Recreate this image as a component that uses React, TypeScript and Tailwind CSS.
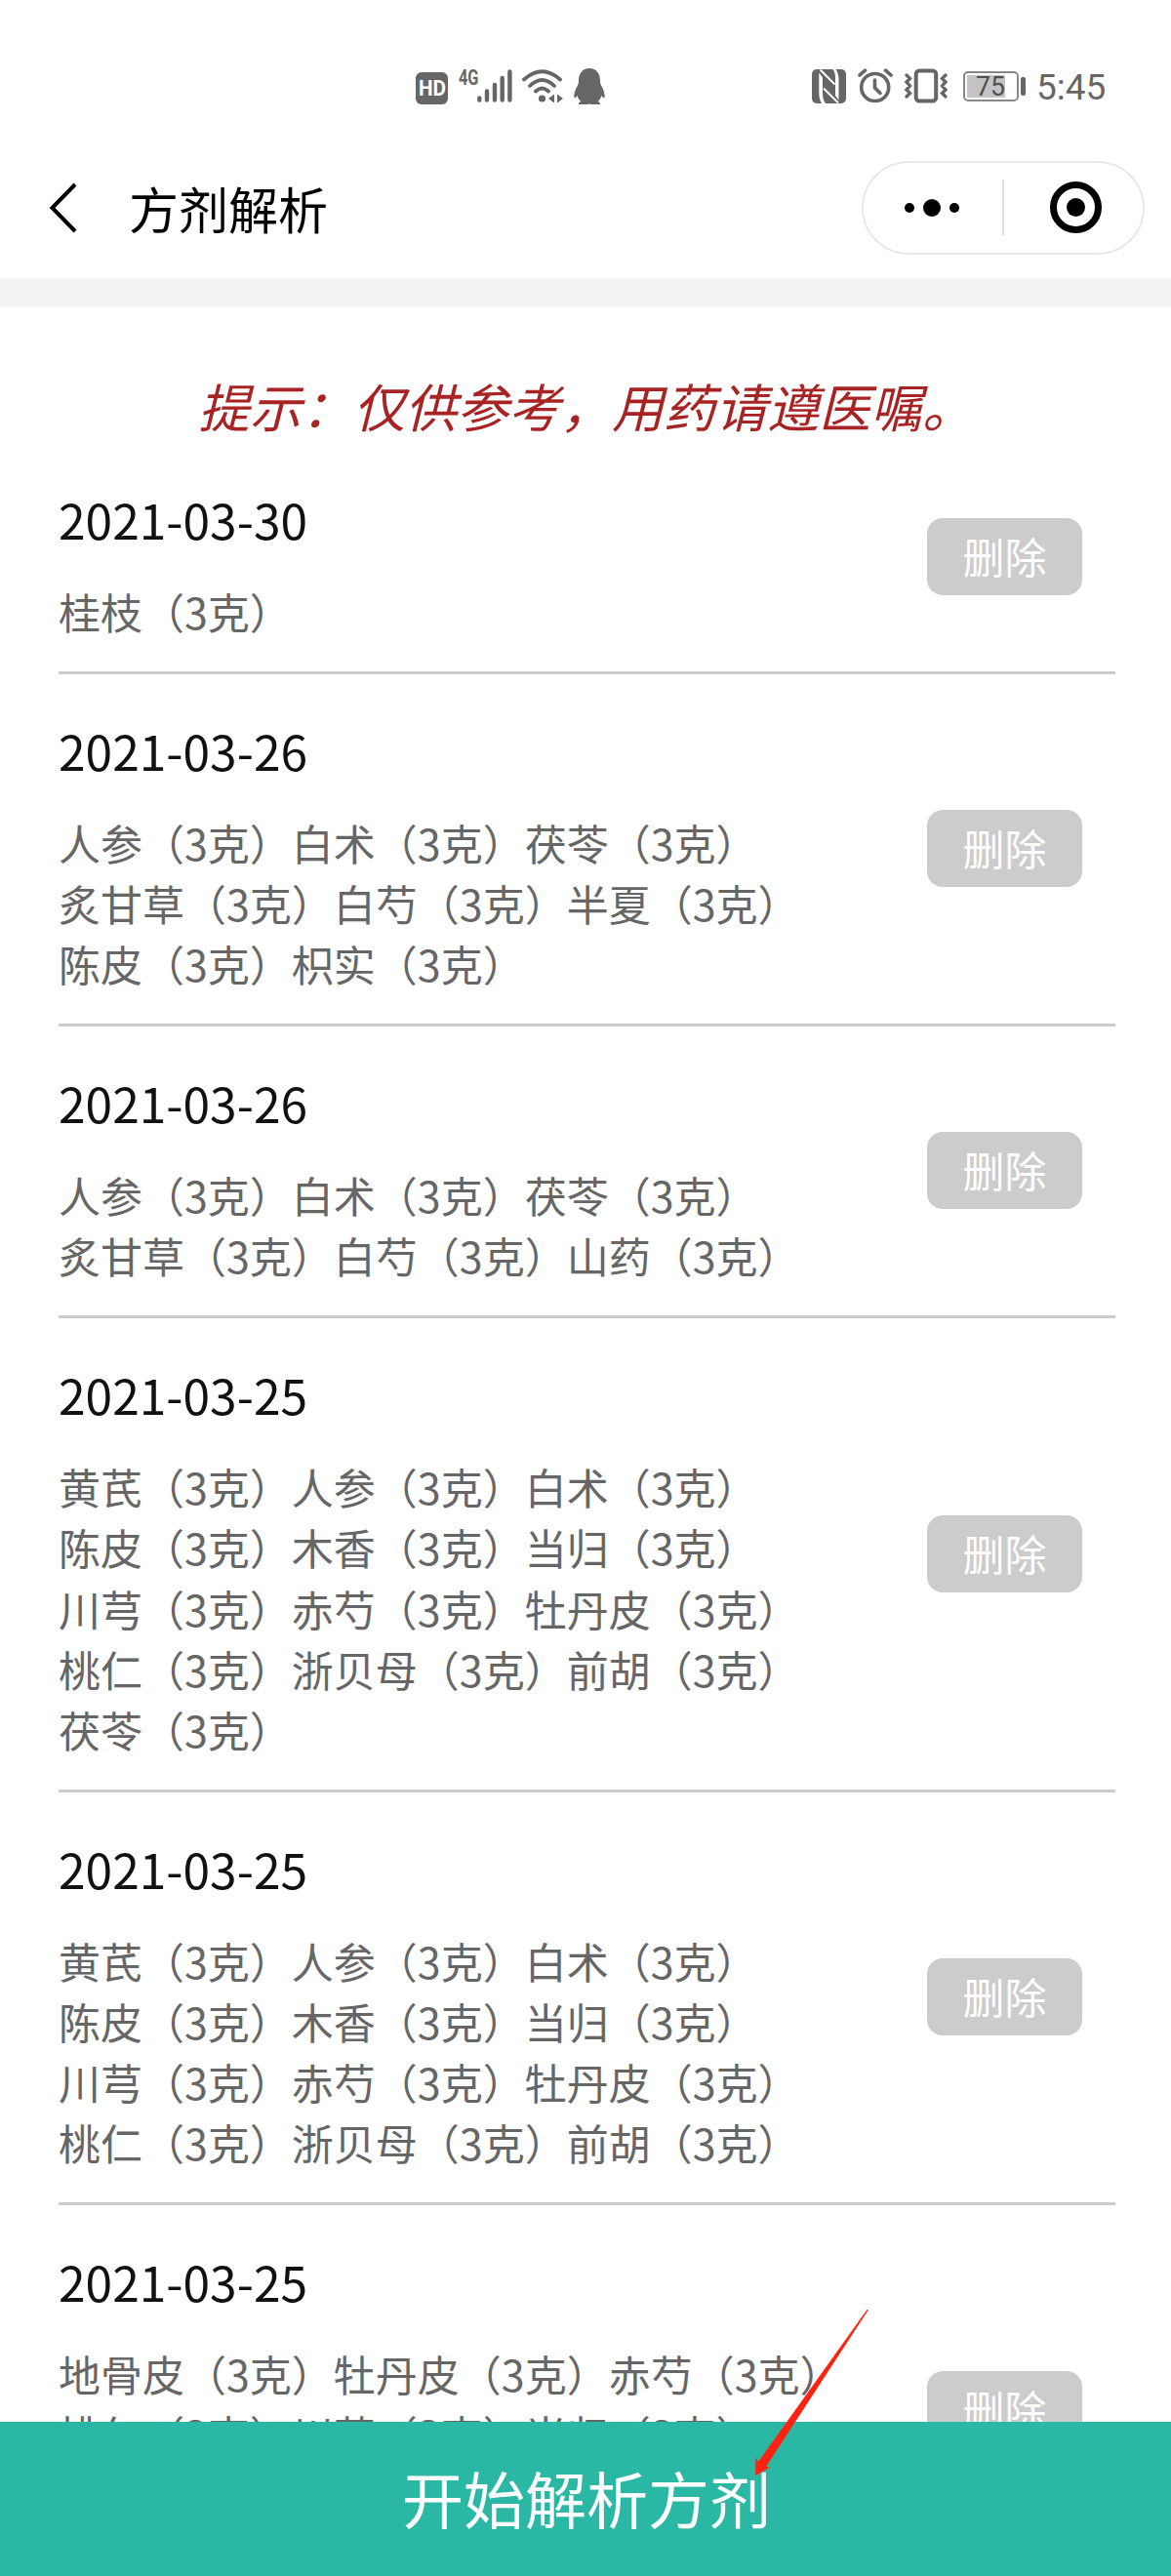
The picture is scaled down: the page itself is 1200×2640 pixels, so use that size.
import React from "react";

type Prescription = {
  id: number;
  date: string;
  lines: string[];
};

const prescriptions: Prescription[] = [
  { id: 1, date: "2021-03-30", lines: ["桂枝（3克）"] },
  {
    id: 2,
    date: "2021-03-26",
    lines: [
      "人参（3克）白术（3克）茯苓（3克）",
      "炙甘草（3克）白芍（3克）半夏（3克）",
      "陈皮（3克）枳实（3克）",
    ],
  },
  {
    id: 3,
    date: "2021-03-26",
    lines: [
      "人参（3克）白术（3克）茯苓（3克）",
      "炙甘草（3克）白芍（3克）山药（3克）",
    ],
  },
  {
    id: 4,
    date: "2021-03-25",
    lines: [
      "黄芪（3克）人参（3克）白术（3克）",
      "陈皮（3克）木香（3克）当归（3克）",
      "川芎（3克）赤芍（3克）牡丹皮（3克）",
      "桃仁（3克）浙贝母（3克）前胡（3克）",
      "茯苓（3克）",
    ],
  },
  {
    id: 5,
    date: "2021-03-25",
    lines: [
      "黄芪（3克）人参（3克）白术（3克）",
      "陈皮（3克）木香（3克）当归（3克）",
      "川芎（3克）赤芍（3克）牡丹皮（3克）",
      "桃仁（3克）浙贝母（3克）前胡（3克）",
    ],
  },
  {
    id: 6,
    date: "2021-03-25",
    lines: [
      "地骨皮（3克）牡丹皮（3克）赤芍（3克）",
      "桃仁（3克）川芎（3克）当归（3克）",
    ],
  },
];

const SignalIcon = () => (
  <svg width="36" height="36" viewBox="0 0 36 36" className="shrink-0" stroke="#666" strokeWidth="4.4" strokeLinecap="round">
    <path d="M2.3 30.5V32.5M10 23.5V32.5M18 17V32.5M25.7 10V32.5M33.4 3.5V32.5" />
  </svg>
);

const WifiIcon = () => (
  <svg width="42" height="36" viewBox="0 0 42 36" className="shrink-0" fill="none" stroke="#666" strokeWidth="3.8" strokeLinecap="round">
    <path d="M2 11.5Q20.5-5 39 11.5M8 18Q20.5 6 33 18M14 23.5Q20.5 17.5 27 23.5" />
    <circle cx="20.5" cy="31" r="3.6" fill="#666" stroke="none" />
    <path d="M33 26.5V35.5L27 31ZM36 26.5V35.5L42 31Z" fill="#666" stroke="none" />
  </svg>
);

const PenguinIcon = () => (
  <svg width="32" height="38" viewBox="0 0 32 38" className="shrink-0" fill="#666">
    <path d="M16 0C9 0 5 5.5 5 12.5C5 15 4.5 16.5 3.5 18.5C1.5 22 .3 25.5 .3 28.5C.3 31 1.5 31 3.6 28C4.3 30.5 5.5 32.5 7.3 34.2C4.5 34.7 4.2 37 6 37H14L16 36.4L18 37H26C27.8 37 27.5 34.7 24.7 34.2C26.5 32.5 27.7 30.5 28.4 28C30.5 31 31.7 31 31.7 28.5C31.7 25.5 30.5 22 28.5 18.5C27.5 16.5 27 15 27 12.5C27 5.5 23 0 16 0Z" />
  </svg>
);

const NfcIcon = () => (
  <svg width="35" height="35" viewBox="0 0 35 35" className="shrink-0">
    <rect width="35" height="35" rx="5" fill="#666" />
    {/* white gaps around the folded N */}
    <path d="M7.3 3.5L11 8.5V25C11 29 12 32 14 35H10C8 32 7.3 28 7.3 24Z" fill="#fff" />
    <path d="M23.5 0H24.5C26.8 3 27.5 7 27.5 11V31.5L24 27V10C24 6 23.7 3 21.5 0Z" fill="#fff" />
    <path d="M8.5 .5L23.5 15.5M12 19.5L27 34.5" stroke="#fff" strokeWidth="2" />
  </svg>
);

const AlarmIcon = () => (
  <svg width="36" height="36" viewBox="0 0 36 36" className="shrink-0" fill="none" stroke="#666" strokeWidth="3.6" strokeLinecap="round">
    <circle cx="17.7" cy="19.5" r="14" />
    <path d="M17.5 12V20L23 25.5" />
    <path d="M2 7L7.5 2.2M28.5 2.2L34 7" />
  </svg>
);

const VibrateIcon = () => (
  <svg width="46" height="36" viewBox="0 0 46 36" className="shrink-0" fill="none" stroke="#666" strokeLinecap="round">
    <rect x="12.7" y="2.5" width="20.5" height="31" rx="3.5" strokeWidth="4" />
    <path d="M3 7L6.5 10.5L3 14L6.5 18L3 22L6.5 25.5L3 29M43 7L39.5 10.5L43 14L39.5 18L43 22L39.5 25.5L43 29" strokeWidth="3.4" />
  </svg>
);

const StatusBar = () => (
  <div className="flex h-[140px] items-start pl-[426px] pt-[70px] text-[#666]">
    <div className="mt-[4px] flex h-[33px] w-[33px] shrink-0 items-center justify-center rounded-[6px] bg-[#666] font-['Roboto'] text-[22px] font-bold leading-none text-white">
      <span className="scale-x-[0.94]">HD</span>
    </div>
    <span className="ml-[11px] w-[19px] origin-left scale-x-[0.74] font-['Roboto'] text-[22px] font-bold leading-[20px]">
      4G
    </span>
    <SignalIcon />
    <div className="ml-[10px] flex">
      <WifiIcon />
    </div>
    <div className="ml-[11px] flex">
      <PenguinIcon />
    </div>
    <div className="ml-[212px] mt-[1px] flex">
      <NfcIcon />
    </div>
    <div className="ml-[12px] flex">
      <AlarmIcon />
    </div>
    <div className="ml-[11px] flex">
      <VibrateIcon />
    </div>
    <div className="ml-[15px] mt-[3px] flex h-[31px] w-[57px] rounded-[5px] border-2 border-[#888] p-[2px]">
      <div className="flex h-full w-[39px] items-center bg-[#c3c3c3] pl-[9px] font-['Roboto'] text-[28px] leading-none text-[#505050]">
        <span className="origin-left scale-x-[0.95]">75</span>
      </div>
    </div>
    <div className="ml-[2px] mt-[9px] h-[19px] w-[5px] rounded-[2px] bg-[#666]" />
    <span className="ml-[11px] font-['Roboto'] text-[37px] leading-[40px]">5:45</span>
  </div>
);

const Header = () => (
  <div className="flex h-[145px] items-center pl-[50px] pr-[27px]">
    <svg width="30" height="52" viewBox="0 0 30 52" fill="none" stroke="#000" strokeWidth="4">
      <path d="M27 2L3.5 26L27 50" />
    </svg>
    <h1 className="ml-[52px] flex-1 text-[51px] leading-[72px] text-black">方剂解析</h1>
    <div className="flex h-[96px] w-[290px] items-center rounded-full border-2 border-[#e8e8e8]">
      <div className="flex w-[142px] items-center justify-center gap-[9px] pr-[2px]">
        <i className="h-[10px] w-[10px] rounded-full bg-black" />
        <i className="h-[18px] w-[18px] rounded-full bg-black" />
        <i className="h-[10px] w-[10px] rounded-full bg-black" />
      </div>
      <div className="h-[57px] w-[2px] bg-[#ddd]" />
      <div className="flex w-[142px] items-center justify-center pl-[5px]">
        <div className="flex h-[53px] w-[53px] items-center justify-center rounded-full border-[7px] border-black">
          <i className="h-[19px] w-[19px] rounded-full bg-black" />
        </div>
      </div>
    </div>
  </div>
);

const PrescriptionItem: React.FC<{ item: Prescription }> = ({ item }) => (
  <div className="flex shrink-0 items-center justify-between border-b-[3px] border-[#ccc] pb-[31px] pr-[34px] pt-[40px] last:h-[423px]">
    <div className="self-start">
      <div className="mb-[27px] text-[49.7px] leading-[74px] text-[#111]">{item.date}</div>
      {item.lines.map((line) => (
        <p key={line} className="whitespace-nowrap text-[43px] leading-[62.07px] text-[#666]">
          {line}
        </p>
      ))}
    </div>
    <button className="mt-[-10px] h-[79px] w-[159px] rounded-[16px] bg-[#ccc] pb-[2px] text-[43px] leading-[77px] text-white">
      删除
    </button>
  </div>
);

const App: React.FC = () => {
  return (
    <div
      lang="zh-CN"
      className="relative flex h-[2640px] w-[1200px] flex-col overflow-hidden bg-white font-['Noto_Sans_CJK_SC',sans-serif]"
    >
      <StatusBar />
      <Header />
      <div className="h-[30px] shrink-0 bg-[#f3f3f3]" />

      {/* Record list, cut off by the bottom button */}
      <div className="flex min-h-0 flex-1 flex-col overflow-hidden pl-[60px] pr-[57px]">
        <p className="h-[139px] shrink-0 whitespace-nowrap pl-[143px] pt-[62px] text-[53px] italic leading-[76px] text-[#a82424]">
          提示：仅供参考，用药请遵医嘱。
        </p>
        {prescriptions.map((item) => (
          <PrescriptionItem key={item.id} item={item} />
        ))}
      </div>

      <button className="h-[158px] shrink-0 bg-[#2ab7a3] pb-[4px] pl-[2px] text-[63px] leading-[154px] text-white">
        开始解析方剂
      </button>

      {/* Pointer to the start button */}
      <svg width="120" height="174" viewBox="0 0 120 174" className="absolute left-[772px] top-[2365px]" fill="#ff2211">
        <path d="M2 172L2.5 153.5L5 158L116.5 2H118L13 163L17.5 163.5Z" />
      </svg>
    </div>
  );
};

export default App;
